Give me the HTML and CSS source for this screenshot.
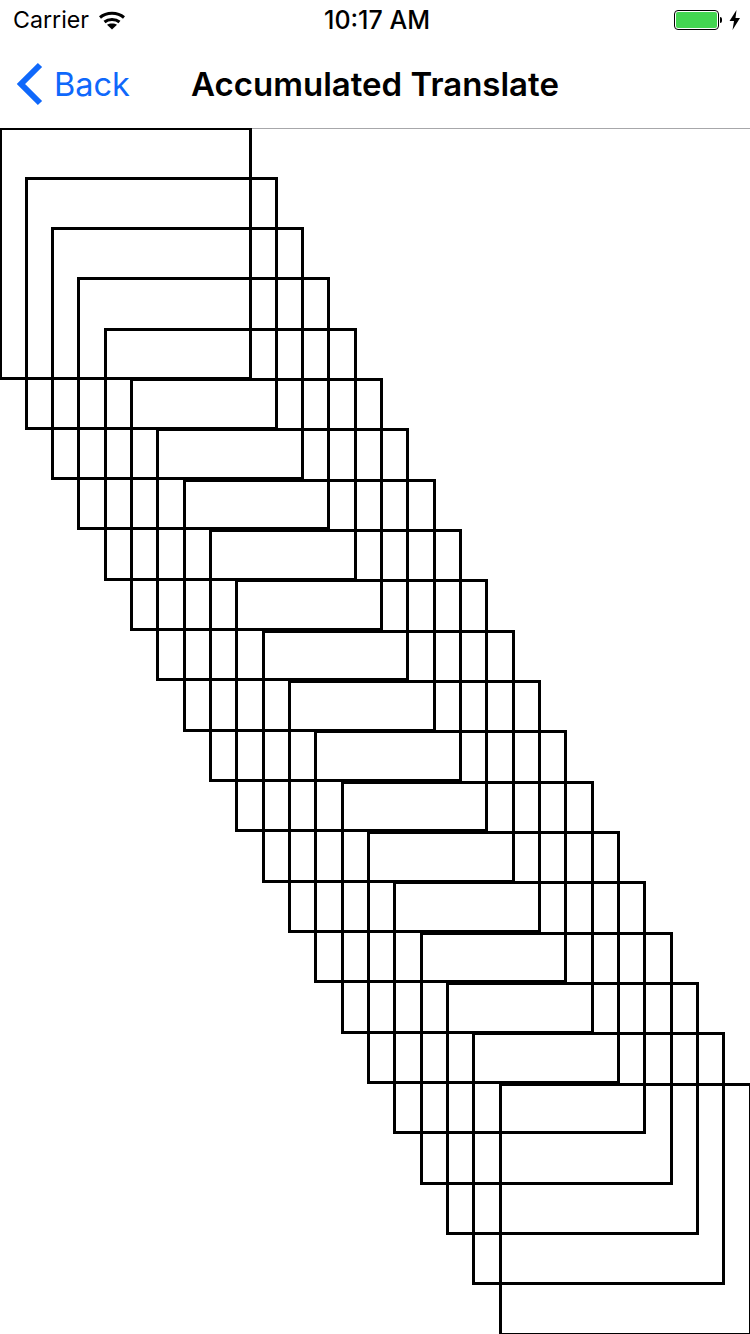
FILE: index.html
```html
<!DOCTYPE html>
<html lang="en">

<head>
    <meta charset="UTF-8">
    <meta name="viewport" content="width=device-width, initial-scale=1.0">
    <title>Accumulated Translate</title>
    <link rel="stylesheet" href="styles.css">
</head>

<body>
    <div class="status-bar">
        <div class="status-left">
            <span class="carrier">Carrier</span>
            <svg class="wifi" width="26" height="19" viewBox="0 0 26 19">
                <path d="M1 6.5C7.5 .8 18.5 .8 25 6.5" fill="none" stroke="#000" stroke-width="3" />
                <path d="M5.5 11C9.5 7.6 16.5 7.6 20.5 11" fill="none" stroke="#000" stroke-width="3" />
                <path d="M13 18.5L8 13.8C10.5 12 15.5 12 18 13.8Z" fill="#000" />
            </svg>
        </div>
        <span class="clock">10:17 AM</span>
        <div class="status-right">
            <div class="battery">
                <div class="battery-fill"></div>
            </div>
            <div class="battery-tip"></div>
            <svg class="bolt" width="12" height="20" viewBox="0 0 12 20">
                <path d="M7.5 0L0.5 11H5L3.5 20L11 8H6.5Z" fill="#000" />
            </svg>
        </div>
    </div>
    <div class="nav-bar">
        <a class="back">
            <svg class="chevron" width="27" height="44" viewBox="0 0 27 44">
                <path d="M24 3L5 22L24 41" fill="none" stroke="#0f68fb" stroke-width="6" />
            </svg>
            <span>Back</span>
        </a>
        <h1 class="title">Accumulated Translate</h1>
    </div>
    <svg class="canvas" id="canvas" width="750" height="1206" viewBox="0 0 750 1206"></svg>
    <script>
        // 20 squares, each one moved by the same step from the last
        let canvas = document.getElementById('canvas');
        for (let i = 0; i < 20; i++) {
            let rect = document.createElementNS('http://www.w3.org/2000/svg', 'rect');
            rect.setAttribute('x', Math.round(i * 26.32 - 0.5) + 0.5);
            rect.setAttribute('y', Math.round(i * 50.32 - 0.5) + 0.5);
            rect.setAttribute('width', 250);
            rect.setAttribute('height', 250);
            canvas.appendChild(rect);
        }
    </script>
</body>

</html>
```

FILE: styles.css
```css
html,
body {
    margin: 0;
    height: 1334px;
    overflow: hidden;
    background-color: #fff;
}

body {
    font-family: "Inter", "Liberation Sans", sans-serif;
    color: #000;
}

.status-bar {
    height: 40px;
    display: grid;
    grid-template-columns: 1fr auto 1fr;
    align-items: center;
    padding: 0 9px 0 13px;
    box-sizing: border-box;
}

.status-left {
    display: flex;
    align-items: center;
    gap: 10px;
}

.carrier {
    font-size: 23.2px;
}

.clock {
    font-size: 25px;
    font-weight: 500;
}

.status-right {
    display: flex;
    align-items: center;
    justify-content: flex-end;
}

.battery {
    width: 45px;
    height: 20px;
    border: 1px solid #000;
    border-radius: 4px;
    padding: 1px;
    box-sizing: border-box;
}

.battery-fill {
    height: 100%;
    background-color: #43d651;
    border-radius: 2px;
}

.battery-tip {
    width: 2px;
    height: 6px;
    background-color: #000;
    border-radius: 0 3px 3px 0;
    margin: 0 7px 0 1px;
}

.nav-bar {
    height: 89px;
    box-sizing: border-box;
    border-bottom: 1px solid #a7a7aa;
    padding-left: 16px;
    display: grid;
    grid-template-columns: 1fr auto 1fr;
    padding-right: 16px;
    align-items: center;
}

.back {
    display: flex;
    align-items: center;
    gap: 11px;
    font-size: 32.5px;
    color: #0f68fb;
}

.title {
    margin: 0;
    font-size: 33px;
    font-weight: 600;
}

.canvas {
    display: block;
    margin-top: -1px;
}

.canvas rect {
    fill: none;
    stroke: #000;
    stroke-width: 3px;
}
```
